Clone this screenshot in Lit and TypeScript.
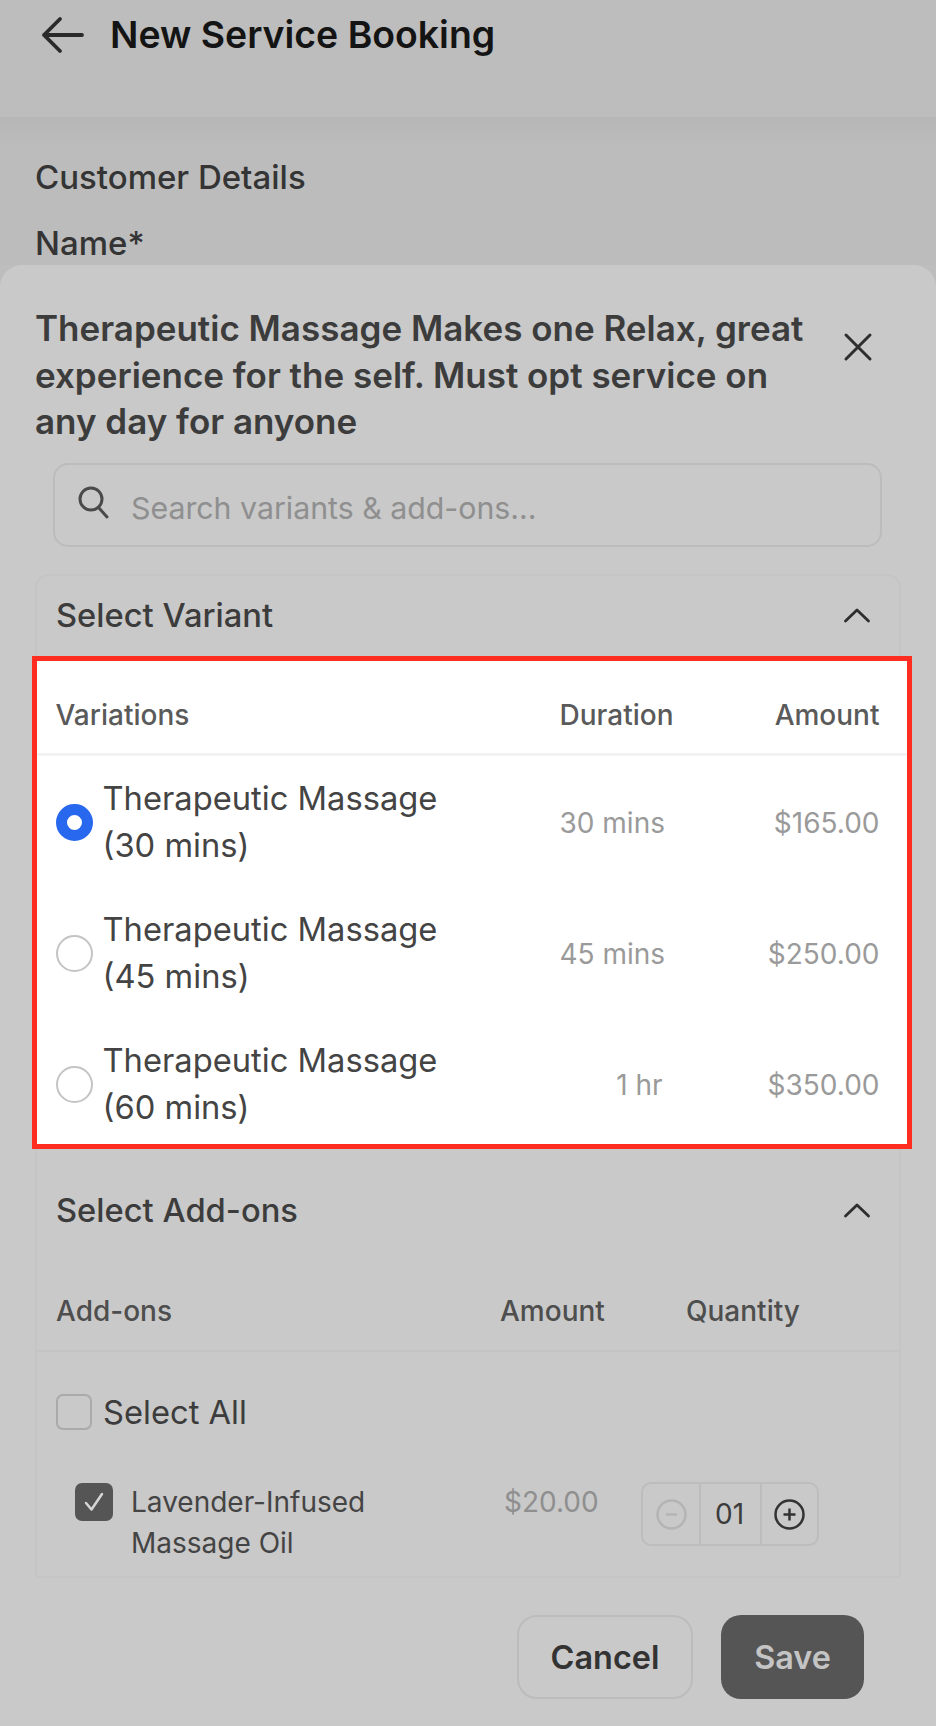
import { LitElement, html, css } from "lit";
import { customElement } from "lit/decorators.js";

const chevron = html`<svg class="chev" viewBox="0 0 28 16" fill="none" stroke="#2e2e2e" stroke-width="2.8" stroke-linecap="round" stroke-linejoin="round"><path d="M2.5 14 L14 3 L25.5 14"/></svg>`;

const variants = [
  { name: "Therapeutic Massage", sub: "(30 mins)", dur: "30 mins", amt: "$165.00", on: true },
  { name: "Therapeutic Massage", sub: "(45 mins)", dur: "45 mins", amt: "$250.00", on: false },
  { name: "Therapeutic Massage", sub: "(60 mins)", dur: "1 hr", amt: "$350.00", on: false },
];

@customElement("app-root")
export class AppRoot extends LitElement {
  static styles = css`
    :host { display: block; width: 936px; height: 1726px; overflow: hidden; position: relative; background: #bdbdbd; font-family: Inter, "Liberation Sans", sans-serif; color: #333; }
    * { box-sizing: border-box; }
    .topbar { height: 117px; display: flex; align-items: flex-start; padding: 14px 0 0 40px; gap: 24px; color: #111; }
    .topbar svg { width: 46px; height: 42px; flex: none; }
    .topbar h1 { margin: 0; font-size: 37.4px; line-height: 42px; font-weight: 600; color: #141414; white-space: nowrap; }
    .page { height: 148px; padding: 36px 35px 0; background: linear-gradient(#b6b6b6, #bcbcbc 30px); }
    .page div { font-size: 33px; line-height: 48px; font-weight: 500; color: #343434; margin-bottom: 18px; }
    .sheet { position: absolute; left: 0; right: 0; top: 265px; bottom: 0; background: #c9c9c9; border-radius: 22px 22px 0 0; padding: 40px 35px 0; }
    .title-row { display: flex; align-items: flex-start; justify-content: space-between; }
    .title-row p { margin: 0; font-size: 35px; line-height: 46.5px; font-weight: 600; color: #3c3c3c; width: 790px; white-space: nowrap; }
    .close { width: 30px; height: 30px; margin: 27px 28px 0 0; flex: none; }
    .search { margin: 18.5px 19px 0 18px; height: 84px; border: 2px solid #bcbcbc; border-radius: 15px; display: flex; align-items: center; gap: 22px; padding: 0 22px; color: #8f8f8f; font-size: 30.3px; }
    .search svg { width: 32px; height: 34px; flex: none; margin-top: -6px; }
    .search span { padding-top: 6px; }
    .card { margin-top: 27px; height: 1004px; border: 2px solid #c5c5c5; border-radius: 14px 14px 0 0; }
    .card-head { display: flex; justify-content: space-between; align-items: center; padding: 0 28px 0 19px; font-size: 32.7px; font-weight: 500; color: #3c3c3c; }
    .chev { width: 28px; height: 16px; }
    .head1 { height: 78px; margin-bottom: 2px; }
    .hl { margin: 0 -13px 0 -5px; height: 493px; background: #fff; border: 5.5px solid #ff2c20; }
    .vrow { display: grid; grid-template-columns: 504px 103px 1fr; padding: 0 27.5px 0 18.5px; white-space: nowrap; }
    .vhead { height: 95px; align-items: center; padding-top: 16px; border-bottom: 3px solid #f2f2f2; font-size: 28px; font-weight: 500; color: #5a5a5a; }
    .vhead span:last-child { text-align: right; }
    .vitem { height: 131px; align-items: center; }
    .vitem:last-child { margin-bottom: -6px; }
    .vname { display: flex; align-items: center; gap: 10px; font-size: 32.7px; line-height: 47px; color: #444; }
    .radio { width: 37px; height: 37px; border-radius: 50%; flex: none; border: 2.5px solid #c4c4c4; background: #fff; margin-top: 2px; }
    .radio.on { border: 11.5px solid #2868ee; }
    .dur, .amt { font-size: 28px; color: #9a9a9a; text-align: right; padding-top: 2px; }
    .head2 { height: 118px; padding-top: 4px; }
    .ahead { display: grid; grid-template-columns: 444px 186px 1fr; height: 81px; align-items: center; padding: 0 0 0 19px; border-bottom: 2px solid #c4c4c4; font-size: 28px; font-weight: 500; color: #4e4e4e; margin-top: 4px; }
    .all { display: flex; align-items: center; gap: 11px; padding: 16px 19px 0; font-size: 32.7px; color: #3c3c3c; height: 104px; }
    .box { width: 36px; height: 36px; border: 2.5px solid #aaa; border-radius: 7px; flex: none; }
    .item { display: grid; grid-template-columns: 38px 391px 137px 178px; margin-top: 26px; padding-left: 38px; }
    .tick { width: 38px; height: 38px; border-radius: 7px; background: #555; display: block; margin-top: 1px; }
    .iname { margin-left: 18px; font-size: 28px; line-height: 41px; color: #444; font-weight: 400; }
    .iamt { font-size: 28px; line-height: 41px; color: #8f8f8f; }
    .step { height: 64px; border: 2px solid #bdbdbd; border-radius: 10px; display: grid; grid-template-columns: 56px 63px 1fr; align-items: center; justify-items: center; font-size: 28px; color: #3c3c3c; }
    .step > * { height: 100%; width: 100%; display: flex; align-items: center; justify-content: center; }
    .step > :nth-child(2) { border-left: 2px solid #bdbdbd; border-right: 2px solid #bdbdbd; padding-right: 2px; }
    .step svg { width: 33px; height: 33px; }
    .actions { margin: 37px 37px 0 0; display: flex; justify-content: flex-end; gap: 28px; }
    .btn { height: 84px; border-radius: 20px; display: flex; align-items: center; justify-content: center; font-size: 32.4px; font-weight: 600; }
    .cancel { width: 176px; border: 2.5px solid #bcbcbc; color: #333; }
    .save { width: 143px; background: #555; color: #c4c4c4; }
  `;

  render() {
    return html`
      <div class="topbar">
        <svg viewBox="0 0 46 42" fill="none" stroke="#2a2a2a" stroke-width="3.8" stroke-linecap="round" stroke-linejoin="round"><path d="M42 21 H4 M20 5 L4 21 L20 37"/></svg>
        <h1>New Service Booking</h1>
      </div>
      <div class="page">
        <div>Customer Details</div>
        <div>Name*</div>
      </div>
      <div class="sheet">
        <div class="title-row">
          <p>Therapeutic Massage Makes one Relax, great<br />experience for the self. Must opt service on<br />any day for anyone</p>
          <svg class="close" viewBox="0 0 30 30" fill="none" stroke="#2e2e2e" stroke-width="3" stroke-linecap="round"><path d="M3 3 L27 27 M27 3 L3 27"/></svg>
        </div>
        <div class="search">
          <svg viewBox="0 0 32 34" fill="none" stroke="#4a4a4a" stroke-width="3" stroke-linecap="round"><circle cx="14" cy="14" r="11"/><path d="M22 23 L30 32"/></svg>
          <span>Search variants &amp; add-ons...</span>
        </div>
        <div class="card">
          <div class="card-head head1"><span>Select Variant</span>${chevron}</div>
          <div class="hl">
            <div class="vrow vhead"><span>Variations</span><span>Duration</span><span>Amount</span></div>
            ${variants.map(
              (v) => html`<div class="vrow vitem">
                <div class="vname"><span class="radio ${v.on ? "on" : ""}"></span><span>${v.name}<br />${v.sub}</span></div>
                <span class="dur">${v.dur}</span><span class="amt">${v.amt}</span>
              </div>`
            )}
          </div>
          <div class="card-head head2"><span>Select Add-ons</span>${chevron}</div>
          <div class="ahead"><span>Add-ons</span><span>Amount</span><span>Quantity</span></div>
          <div class="all"><span class="box"></span><span>Select All</span></div>
          <div class="item">
            <svg class="tick" viewBox="0 0 38 38" fill="none" stroke="#d6d6d6" stroke-width="2.5" stroke-linecap="round" stroke-linejoin="round"><path d="M11 20 L16.5 26.5 L27 11"/></svg>
            <div class="iname">Lavender-Infused<br />Massage Oil</div>
            <div class="iamt">$20.00</div>
            <div class="step">
              <span><svg viewBox="0 0 33 33" fill="none" stroke="#b4b4b4" stroke-width="2.5"><circle cx="16.5" cy="16.5" r="14"/><path d="M11 16.5 H22"/></svg></span>
              <span>01</span>
              <span><svg viewBox="0 0 33 33" fill="none" stroke="#333" stroke-width="2.5"><circle cx="16.5" cy="16.5" r="14"/><path d="M10.5 16.5 H22.5 M16.5 10.5 V22.5"/></svg></span>
            </div>
          </div>
        </div>
        <div class="actions"><div class="btn cancel">Cancel</div><div class="btn save">Save</div></div>
      </div>
    `;
  }
}
